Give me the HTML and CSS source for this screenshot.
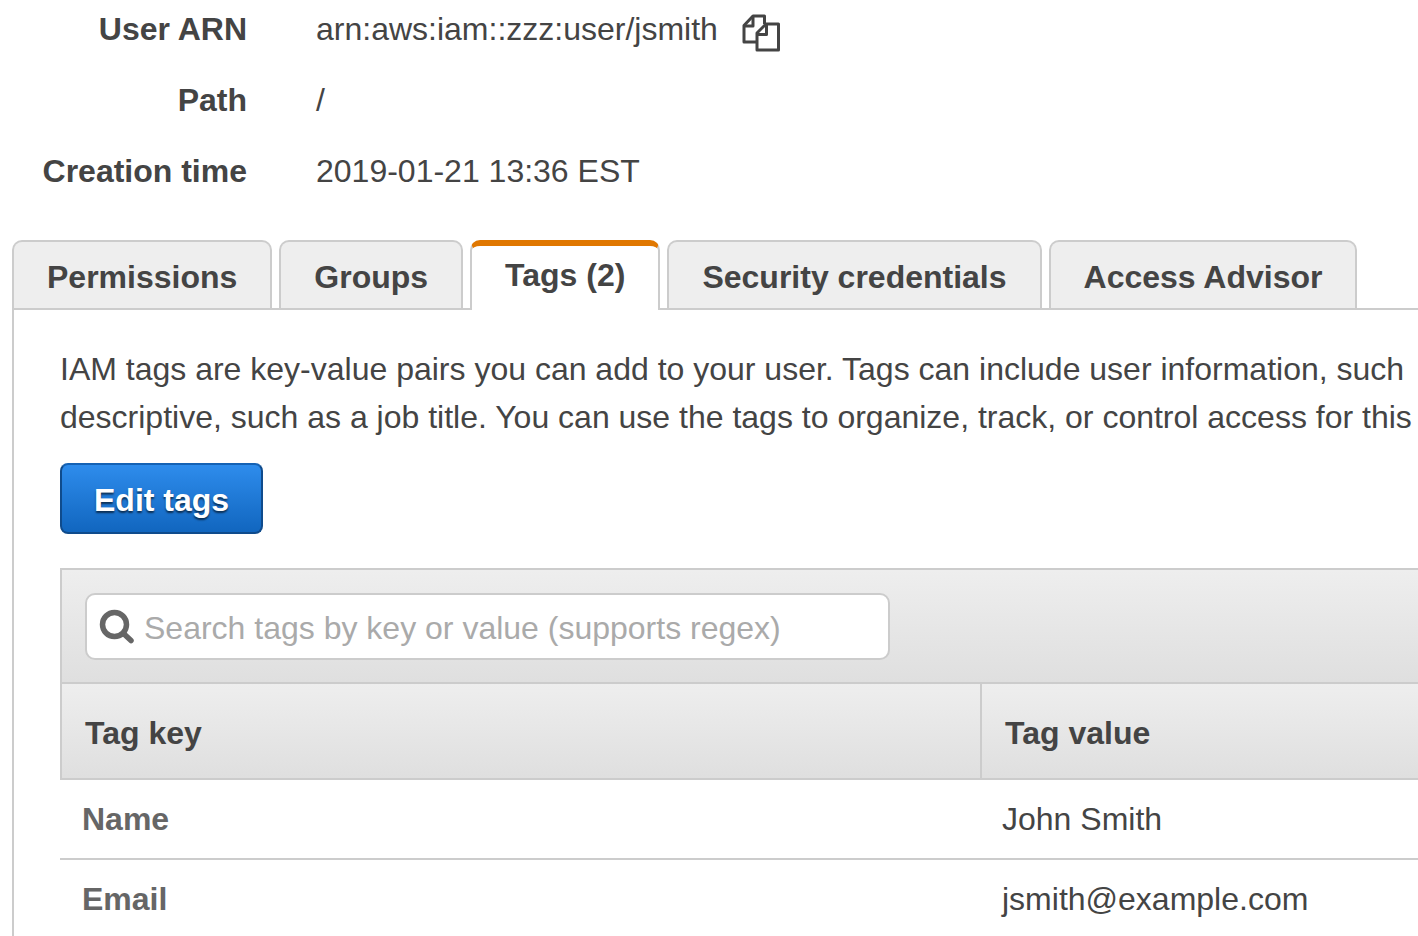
FILE: index.html
```html
<!DOCTYPE html>
<html lang="en">

<head>
    <meta charset="UTF-8">
    <meta name="viewport" content="width=device-width, initial-scale=1.0">
    <title>jsmith - IAM user</title>
    <link rel="stylesheet" href="styles.css">
</head>

<body>
    <!-- user summary -->
    <dl class="summary">
        <dt>User ARN</dt>
        <dd>
            arn:aws:iam::zzz:user/jsmith
            <button type="button" class="copy-btn" aria-label="Copy">
                <svg width="38" height="38" viewBox="0 0 38 38">
                    <path d="M14 28H2V11.500L11 2h11.500v8" />
                    <path d="M2 12h9V2" />
                    <path d="M15 36h21.500V10H24l-9 9z" />
                    <path d="M15 20.500h9.500V10" />
                </svg>
            </button>
        </dd>
        <dt>Path</dt>
        <dd>/</dd>
        <dt>Creation time</dt>
        <dd>2019-01-21 13:36 EST</dd>
    </dl>

    <!-- tabs -->
    <nav class="tabs">
        <a href="#permissions" class="tab">Permissions</a>
        <a href="#groups" class="tab">Groups</a>
        <a href="#tags" class="tab active">Tags (2)</a>
        <a href="#security" class="tab">Security credentials</a>
        <a href="#advisor" class="tab">Access Advisor</a>
    </nav>

    <div class="panel" id="tags">
        <p class="intro">IAM tags are key-value pairs you can add to your user. Tags can include user information, such<br>descriptive, such as a job title. You can use the tags to organize, track, or control access for this</p>
        <button type="button" class="edit-btn">Edit tags</button>

        <div class="toolbar">
            <label class="search">
                <svg width="36" height="36" viewBox="0 0 36 36">
                    <circle cx="15.500" cy="15.500" r="12" />
                    <path d="M24.500 24.500l7.500 7" />
                </svg>
                <input type="text" class="search-input" aria-label="Search tags" placeholder="Search tags by key or value (supports regex)">
            </label>
        </div>
        <table class="tag-table">
            <thead>
                <tr>
                    <th class="col-key">Tag key</th>
                    <th>Tag value</th>
                </tr>
            </thead>
            <tbody>
                <tr>
                    <td class="key">Name</td>
                    <td>John Smith</td>
                </tr>
                <tr>
                    <td class="key">Email</td>
                    <td>jsmith@example.com</td>
                </tr>
            </tbody>
        </table>
    </div>
</body>

</html>
```
FILE: styles.css
```css
* {
    padding: 0;
    margin: 0;
    box-sizing: border-box;
}

body {
    display: flex;
    flex-direction: column;
    height: 100vh;
    overflow: hidden;
    background: #fff;
    color: #444;
    font-family: "Helvetica Neue", "Liberation Sans", Arial, sans-serif;
    font-size: 32px;
    line-height: 48px;
}

/* user summary */
.summary {
    display: grid;
    grid-template-columns: 247px 1fr;
    column-gap: 69px;
    row-gap: 23px;
    padding: 5px 0 45px;
}

.summary dt {
    font-weight: bold;
    text-align: right;
}

.summary dd {
    display: flex;
    align-items: center;
    gap: 24px;
}

.copy-btn {
    display: flex;
    border: none;
    background: none;
    padding-top: 8px;
    cursor: pointer;
}

.copy-btn svg {
    fill: none;
    stroke: #444;
    stroke-width: 3;
    stroke-linejoin: round;
}

/* tabs */
.tabs {
    display: flex;
    align-items: flex-start;
    flex-shrink: 0;
    gap: 7px;
    height: 68px;
    padding-left: 12px;
}

.tab {
    padding: 11px 33px 7px;
    border: 2px solid #ccc;
    border-bottom: none;
    border-radius: 10px 10px 0 0;
    background: #eee;
    color: #444;
    font-weight: bold;
    text-decoration: none;
    white-space: nowrap;
}

/* the open tab covers the panel border below it */
.tab.active {
    position: relative;
    padding: 5px 33px 11px;
    border-top: 6px solid #e07700;
    background: #fff;
}

.panel {
    flex: 1 0 auto;
    margin-left: 12px;
    padding: 35px 0 0 46px;
    border-top: 2px solid #ccc;
    border-left: 2px solid #ccc;
}

.intro {
    white-space: nowrap;
}

.edit-btn {
    display: block;
    height: 71px;
    margin: 22px 0 34px;
    padding: 2px 32px 0;
    border: 2px solid #0f4b8c;
    border-top-color: #1562b4;
    border-radius: 8px;
    background: linear-gradient(#2e8cec, #1166bf);
    color: #fff;
    font: inherit;
    font-weight: bold;
    text-shadow: 0 2px 2px rgba(0, 0, 0, .6);
    cursor: pointer;
}

/* search bar above the table */
.toolbar {
    padding: 23px 23px 22px;
    border: 2px solid #ccc;
    border-width: 2px 0 0 2px;
    background: linear-gradient(#eee, #dfdfdf);
}

.search {
    display: flex;
    align-items: center;
    gap: 9px;
    width: 805px;
    height: 67px;
    padding: 0 12px;
    border: 2px solid #ccc;
    border-radius: 10px;
    background: #fff;
}

.search svg {
    fill: none;
    stroke: #666;
    stroke-width: 5.5;
    stroke-linecap: round;
}

.search-input {
    flex: 1;
    height: 48px;
    padding-top: 2px;
    border: none;
    outline: none;
    background: none;
    color: #444;
    font: inherit;
}

.search-input::placeholder {
    color: #aaa;
}

.tag-table {
    width: 100%;
    border-spacing: 0;
}

.tag-table th {
    padding: 25px 23px 21px;
    border: 2px solid #ccc;
    border-right: none;
    background: linear-gradient(#eee, #dfdfdf);
    text-align: left;
}

.col-key {
    width: 920px;
}

.tag-table td {
    padding: 15px 22px;
    border-bottom: 2px solid #ccc;
}

.tag-table .key {
    color: #666;
    font-weight: bold;
}
```
